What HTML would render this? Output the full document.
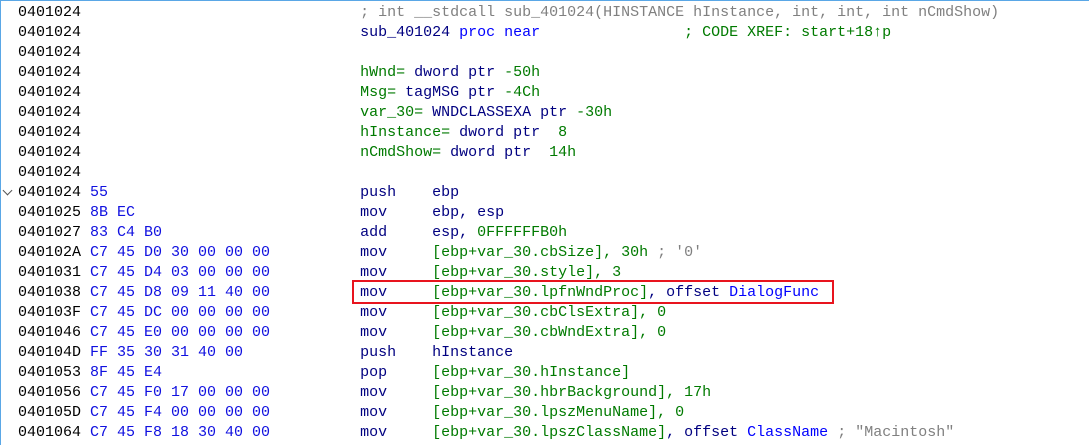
<!DOCTYPE html>
<html><head><meta charset="utf-8"><style>
html,body{margin:0;padding:0;background:#fff;width:1089px;height:445px;overflow:hidden}
.wrap{position:absolute;left:0;top:0;width:1089px;height:445px;border-left:1px solid #5aa7e6;border-top:1px solid #5aa7e6;box-sizing:border-box}
pre{position:absolute;left:17px;top:2px;margin:0;font-family:"Liberation Mono",monospace;font-size:15px;line-height:20px;color:#000;letter-spacing:0}
.b{color:#1010e0}.n{color:#000080}.g{color:#007a00}.gr{color:#808080}.bl{color:#0000ff}
.box{position:absolute;left:351px;top:279px;width:482px;height:24px;border:2px solid #e8141e;box-sizing:border-box}
.chev{position:absolute;left:3px;top:186px;width:6px;height:6px;border-right:1.5px solid #555;border-bottom:1.5px solid #555;transform:rotate(45deg)}
</style></head><body><div class="wrap">
<pre>0401024                               <span class="gr">; int __stdcall sub_401024(HINSTANCE hInstance, int, int, int nCmdShow)</span>
0401024                               <span class="n">sub_401024</span> <span class="bl">proc near</span>                <span class="g">; CODE XREF: start+18↑p</span>
0401024
0401024                               <span class="g">hWnd=</span> <span class="n">dword ptr</span> <span class="g">-50h</span>
0401024                               <span class="g">Msg=</span> <span class="n">tagMSG ptr</span> <span class="g">-4Ch</span>
0401024                               <span class="g">var_30=</span> <span class="n">WNDCLASSEXA ptr</span> <span class="g">-30h</span>
0401024                               <span class="g">hInstance=</span> <span class="n">dword ptr</span>  <span class="g">8</span>
0401024                               <span class="g">nCmdShow=</span> <span class="n">dword ptr</span>  <span class="g">14h</span>
0401024
0401024 <span class="b">55</span>                            <span class="n">push    ebp</span>
0401025 <span class="b">8B EC</span>                         <span class="n">mov     ebp, esp</span>
0401027 <span class="b">83 C4 B0</span>                      <span class="n">add     esp,</span> <span class="g">0FFFFFFB0h</span>
040102A <span class="b">C7 45 D0 30 00 00 00</span>          <span class="n">mov</span>     <span class="g">[ebp+var_30.cbSize], 30h</span> <span class="gr">; '0'</span>
0401031 <span class="b">C7 45 D4 03 00 00 00</span>          <span class="n">mov</span>     <span class="g">[ebp+var_30.style], 3</span>
0401038 <span class="b">C7 45 D8 09 11 40 00</span>          <span class="n">mov</span>     <span class="g">[ebp+var_30.lpfnWndProc]</span><span class="n">, offset</span> <span class="bl">DialogFunc</span>
040103F <span class="b">C7 45 DC 00 00 00 00</span>          <span class="n">mov</span>     <span class="g">[ebp+var_30.cbClsExtra], 0</span>
0401046 <span class="b">C7 45 E0 00 00 00 00</span>          <span class="n">mov</span>     <span class="g">[ebp+var_30.cbWndExtra], 0</span>
040104D <span class="b">FF 35 30 31 40 00</span>             <span class="n">push    hInstance</span>
0401053 <span class="b">8F 45 E4</span>                      <span class="n">pop</span>     <span class="g">[ebp+var_30.hInstance]</span>
0401056 <span class="b">C7 45 F0 17 00 00 00</span>          <span class="n">mov</span>     <span class="g">[ebp+var_30.hbrBackground], 17h</span>
040105D <span class="b">C7 45 F4 00 00 00 00</span>          <span class="n">mov</span>     <span class="g">[ebp+var_30.lpszMenuName], 0</span>
0401064 <span class="b">C7 45 F8 18 30 40 00</span>          <span class="n">mov</span>     <span class="g">[ebp+var_30.lpszClassName]</span><span class="n">, offset</span> <span class="bl">ClassName</span> <span class="gr">; "Macintosh"</span></pre>
<div class="chev"></div>
<div class="box"></div>
</div></body></html>
